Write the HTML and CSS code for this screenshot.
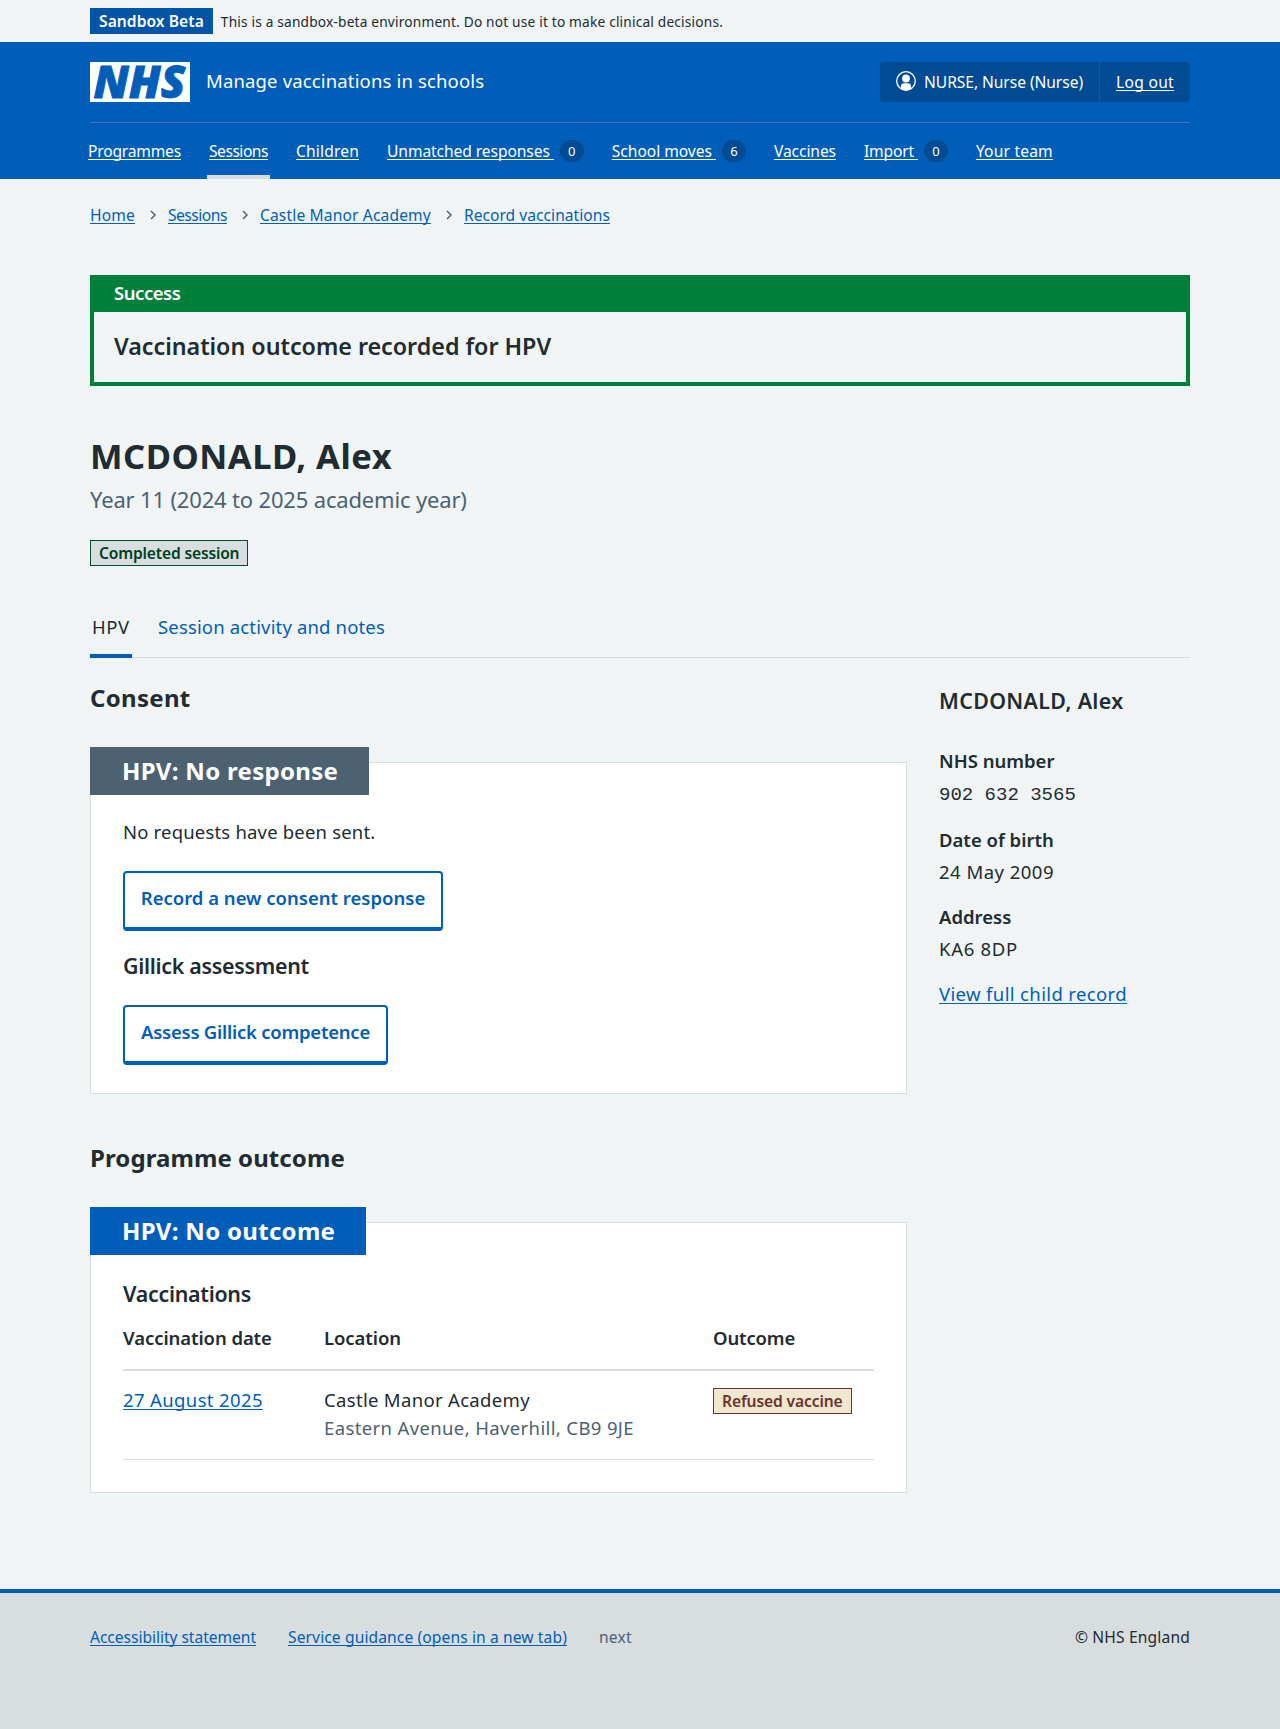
FILE: index.html
```html
<!DOCTYPE html>
<html lang="en">
<head>
<meta charset="utf-8">
<title>MCDONALD, Alex – Manage vaccinations in schools</title>
<link rel="stylesheet" href="styles.css">
</head>
<body>
<div class="environment container">
  <strong class="tag tag-environment">Sandbox Beta</strong>
  <span class="environment-text">This is a sandbox-beta environment. Do not use it to make clinical decisions.</span>
</div>
<header class="header">
  <div class="container">
    <div class="header-top">
      <a class="brand" href="#">
        <svg class="logo" width="100" height="40" viewBox="0 0 100 40" role="img" aria-label="NHS">
          <rect width="100" height="40" fill="#fff"/>
          <text class="logo-text" x="3.4" y="36.2" textLength="92" lengthAdjust="spacingAndGlyphs">NHS</text>
        </svg>
        <span class="service-name">Manage vaccinations in schools</span>
      </a>
      <div class="account">
        <span class="account-user">
          <svg class="user-icon" width="20" height="20" viewBox="0 0 20 20" aria-hidden="true">
            <circle cx="10" cy="10" r="9.3" fill="none" stroke="#fff" stroke-width="1.3"/>
            <circle cx="10" cy="7.5" r="3.9" fill="#fff"/>
            <path d="M5 18v-2.6Q5 12.3 8 12.3h4q3 0 3 3.1V18q-2.4 1.4-5 1.4T5 18Z" fill="#fff"/>
          </svg>
          <span>NURSE, Nurse (Nurse)</span>
        </span>
        <a class="account-logout" href="#">Log out</a>
      </div>
    </div>
    <nav class="nav">
      <a class="nav-item nav-programmes" href="#"><span class="u">Programmes</span></a>
      <a class="nav-item nav-sessions current" href="#"><span class="u">Sessions</span></a>
      <a class="nav-item nav-children" href="#"><span class="u">Children</span></a>
      <a class="nav-item nav-responses" href="#"><span class="u">Unmatched responses </span><span class="count">0</span></a>
      <a class="nav-item nav-moves" href="#"><span class="u">School moves </span><span class="count">6</span></a>
      <a class="nav-item nav-vaccines" href="#"><span class="u">Vaccines</span></a>
      <a class="nav-item nav-import" href="#"><span class="u">Import </span><span class="count">0</span></a>
      <a class="nav-item nav-team" href="#"><span class="u">Your team</span></a>
    </nav>
  </div>
</header>
<div class="container">
  <nav class="breadcrumb">
    <a href="#">Home</a>
    <svg class="chevron" width="6" height="10" viewBox="0 0 6 10"><path d="M1 1l4 4-4 4"/></svg>
    <a class="crumb-sessions" href="#">Sessions</a>
    <svg class="chevron" width="6" height="10" viewBox="0 0 6 10"><path d="M1 1l4 4-4 4"/></svg>
    <a href="#">Castle Manor Academy</a>
    <svg class="chevron" width="6" height="10" viewBox="0 0 6 10"><path d="M1 1l4 4-4 4"/></svg>
    <a class="crumb-record" href="#">Record vaccinations</a>
  </nav>
  <main>
    <section class="notification">
      <h2 class="notification-title">Success</h2>
      <p class="notification-text">Vaccination outcome recorded for HPV</p>
    </section>
    <h1>MCDONALD, Alex</h1>
    <p class="caption">Year 11 (2024 to 2025 academic year)</p>
    <strong class="tag tag-completed">Completed session</strong>
    <nav class="tabs">
      <a class="tab tab-current" href="#">HPV</a>
      <a class="tab" href="#">Session activity and notes</a>
    </nav>
    <div class="columns">
      <div class="column-main">
        <h2 class="section-title">Consent</h2>
        <section class="card">
          <h3 class="card-title card-title-grey">HPV: No response</h3>
          <p class="card-text">No requests have been sent.</p>
          <a class="button" href="#">Record a new consent response</a>
          <h4 class="subheading gillick">Gillick assessment</h4>
          <a class="button button-assess" href="#">Assess Gillick competence</a>
        </section>
        <h2 class="section-title section-title-outcome">Programme outcome</h2>
        <section class="card card-outcome">
          <h3 class="card-title">HPV: No outcome</h3>
          <h4 class="subheading vaccinations">Vaccinations</h4>
          <div class="table">
            <div class="row row-head">
              <span class="th-date">Vaccination date</span><span>Location</span><span class="th-outcome">Outcome</span>
            </div>
            <div class="row">
              <div><a class="date-link" href="#">27 August 2025</a></div>
              <div class="location">Castle Manor Academy<br><span class="secondary">Eastern Avenue, Haverhill, CB9 9JE</span></div>
              <div><strong class="tag tag-refused">Refused vaccine</strong></div>
            </div>
          </div>
        </section>
      </div>
      <aside class="sidebar">
        <h2 class="sidebar-title">MCDONALD, Alex</h2>
        <dl>
          <dt>NHS number</dt>
          <dd class="mono">902 632 3565</dd>
          <dt>Date of birth</dt>
          <dd class="dob">24 May 2009</dd>
          <dt>Address</dt>
          <dd class="postcode">KA6 8DP</dd>
        </dl>
        <a class="record-link" href="#">View full child record</a>
      </aside>
    </div>
  </main>
</div>
<footer class="footer">
  <div class="container footer-inner">
    <a class="footer-accessibility" href="#">Accessibility statement</a>
    <a class="footer-guidance" href="#">Service guidance (opens in a new tab)</a>
    <span class="footer-release">next</span>
    <span class="copyright">© NHS England</span>
  </div>
</footer>
</body>
</html>
```
FILE: styles.css
```css
* { box-sizing: border-box; }
body {
  margin: 0;
  min-height: 1729px;
  display: flex;
  flex-direction: column;
  background: #f0f4f5;
  color: #212b32;
  font-family: "Noto Sans", "Open Sans", sans-serif;
  font-size: 18.5px;
  line-height: 28px;
}
h1, h2, h3, h4, p, dl, dd { margin: 0; font-weight: 600; white-space: nowrap; }
p, dd { font-weight: 400; }
a { color: #005eb8; text-decoration: underline; text-decoration-thickness: 1px; text-underline-offset: 2px; text-decoration-skip-ink: none; white-space: nowrap; }
.container { width: 1100px; margin: 0 auto; }

/* Tags */
.tag {
  display: block;
  width: max-content;
  height: 26px;
  padding: 0 8px;
  border: 1px solid;
  font-size: 15.6px;
  font-weight: 600;
  line-height: 24px;
}
.tag-environment { background: #0055a6; border-color: #0055a6; color: #fff; letter-spacing: .06px; }
.tag-completed { margin-top: 24px; background: #d8dde0; border-color: #004c2d; color: #00401e; letter-spacing: -.17px; }
.tag-refused { margin-top: 2px; background: #f1e6d0; border-color: #6a332d; color: #6a332d; letter-spacing: -.12px; }

/* Environment banner */
.environment { display: flex; align-items: center; gap: 8px; height: 42px; }
.environment-text { font-size: 13.7px; letter-spacing: .19px; padding-top: 1px; }

/* Header */
.header { background: #005eb8; color: #fff; font-size: 15.6px; }
.header a { color: #fff; }
.header-top { display: flex; justify-content: space-between; height: 81px; padding: 20px 0; border-bottom: 1px solid #3e72bd; }
.brand { display: flex; gap: 16px; text-decoration: none; }
.logo { display: block; flex: none; overflow: visible; }
.logo-text { font-family: "Open Sans", sans-serif; font-size: 45px; font-weight: 800; font-style: italic; fill: #005eb8; stroke: #005eb8; stroke-width: .8; }
.service-name { font-size: 18.5px; line-height: 38px; letter-spacing: .15px; }
.account { display: flex; height: 40px; background: #004b93; border-radius: 4px; line-height: 40px; white-space: nowrap; }
.account-user { display: flex; gap: 8px; width: 220px; padding-left: 16px; border-right: 1px solid #005eb8; letter-spacing: -.06px; }
.user-icon { flex: none; margin-top: 9px; }
.account-logout { width: 90px; padding-left: 16px; letter-spacing: .29px; }

.nav { display: flex; gap: 24px; height: 56px; margin-left: -4px; }
.nav-item { display: flex; align-items: center; gap: 6px; padding: 0 2px; text-decoration: none; }
.u { white-space: pre; text-decoration: underline; text-decoration-thickness: 1px; text-underline-offset: 2px; text-decoration-skip-ink: none; }
.current { box-shadow: inset 0 -4px #d8dde0; }
.count { width: 24px; height: 22px; border-radius: 12px; background: #004b93; font-size: 13px; line-height: 22px; text-align: center; letter-spacing: 0; }
.nav-programmes { letter-spacing: -.19px; }
.nav-sessions { letter-spacing: -.48px; }
.nav-children { letter-spacing: .16px; }
.nav-responses { letter-spacing: -.08px; }
.nav-moves { letter-spacing: -.03px; }
.nav-vaccines { letter-spacing: -.09px; }
.nav-import { letter-spacing: -.16px; }
.nav-team { letter-spacing: .18px; }

/* Breadcrumb */
.breadcrumb { display: flex; align-items: center; height: 24px; margin: 24px 0 48px; font-size: 15.6px; line-height: 24px; letter-spacing: .14px; }
.chevron { margin: 0 12px 0 15px; fill: none; stroke: #4c6272; stroke-width: 1.5; }
.crumb-sessions { letter-spacing: -.48px; }
.crumb-record { letter-spacing: .03px; }

/* Success banner */
.notification { height: 111px; border: 4px solid #007f3b; }
.notification-title { height: 33px; padding-left: 20px; background: #007f3b; color: #fff; font-size: 18.5px; line-height: 27px; letter-spacing: -.45px; }
.notification-text { padding: 18px 20px 20px; font-size: 23.3px; font-weight: 600; line-height: 32px; letter-spacing: -.03px; }

/* Page title */
h1 { margin-top: 48px; font-size: 34.5px; font-weight: 700; line-height: 44px; letter-spacing: .5px; }
.caption { margin-top: 4px; color: #4c6272; font-size: 22px; line-height: 34px; letter-spacing: -.17px; }

/* Tabs */
.tabs { display: flex; gap: 24px; height: 46px; margin-top: 46px; box-shadow: inset 0 -1px #d8dde0; }
.tab { padding: 1px 2px 0; text-decoration: none; letter-spacing: .156px; }
.tab-current { width: 42px; border-bottom: 4px solid #005eb8; color: #212b32; letter-spacing: .5px; }

/* Columns */
.columns { display: grid; grid-template-columns: 817px 251px; gap: 32px; }
.section-title { margin-top: 24px; font-size: 24px; font-weight: 700; line-height: 32px; letter-spacing: .3px; }
.section-title-outcome { margin-top: 48px; letter-spacing: .08px; }
.card { height: 332px; margin-top: 48px; padding: 0 32px; background: #fff; border: 1px solid #d8dde0; }
.card-outcome { height: 271px; }
.card-title { width: 276px; height: 48px; margin: -16px 0 0 -33px; padding-left: 32px; background: #005eb8; color: #fff; font-size: 24px; font-weight: 700; line-height: 48px; letter-spacing: .3px; }
.card-title-grey { width: 279px; background: #4c6272; }
.card-text { margin-top: 23px; letter-spacing: .18px; }
.button { display: block; width: 320px; height: 60px; margin-top: 25px; padding-top: 11px; border: 2px solid #005eb8; border-bottom-width: 4px; border-radius: 4px; text-align: center; font-weight: 600; text-decoration: none; }
.button-assess { width: 265px; margin-top: 24px; letter-spacing: -.24px; }
.subheading { font-size: 21.4px; line-height: 30px; letter-spacing: -.29px; }
.gillick { margin-top: 20px; }
.vaccinations { margin-top: 24px; }

/* Vaccination table */
.table { margin-top: 15px; }
.row { display: grid; grid-template-columns: 201px 389px 161px; padding: 15px 0 17px; border-bottom: 1px solid #d8dde0; }
.row-head { padding: 0 0 17px; border-bottom-width: 2px; font-weight: 600; letter-spacing: -.08px; }
.th-outcome { letter-spacing: -.16px; }
.date-link { letter-spacing: .37px; }
.location { letter-spacing: .32px; white-space: nowrap; }
.secondary { color: #4c6272; letter-spacing: .37px; }

/* Child summary */
.sidebar-title { margin-top: 28px; font-size: 21.4px; line-height: 30px; letter-spacing: .33px; }
dl { margin-top: 31px; }
dt { font-weight: 600; margin-bottom: 4px; }
dd { margin-bottom: 17px; }
.mono { padding-top: 2px; font-family: "Liberation Mono", monospace; font-size: 19px; }
.dob { letter-spacing: .48px; }
.postcode { letter-spacing: .7px; }
.record-link { letter-spacing: .367px; }

/* Footer */
.footer { flex: 1; margin-top: 96px; padding-top: 32px; border-top: 4px solid #005eb8; background: #d8dde0; }
.footer-inner { display: flex; gap: 32px; font-size: 15.6px; line-height: 24px; }
.footer-accessibility { letter-spacing: -.04px; }
.footer-guidance { letter-spacing: .11px; }
.footer-release { color: #4c6272; letter-spacing: .2px; }
.copyright { margin-left: auto; letter-spacing: .157px; }
```
